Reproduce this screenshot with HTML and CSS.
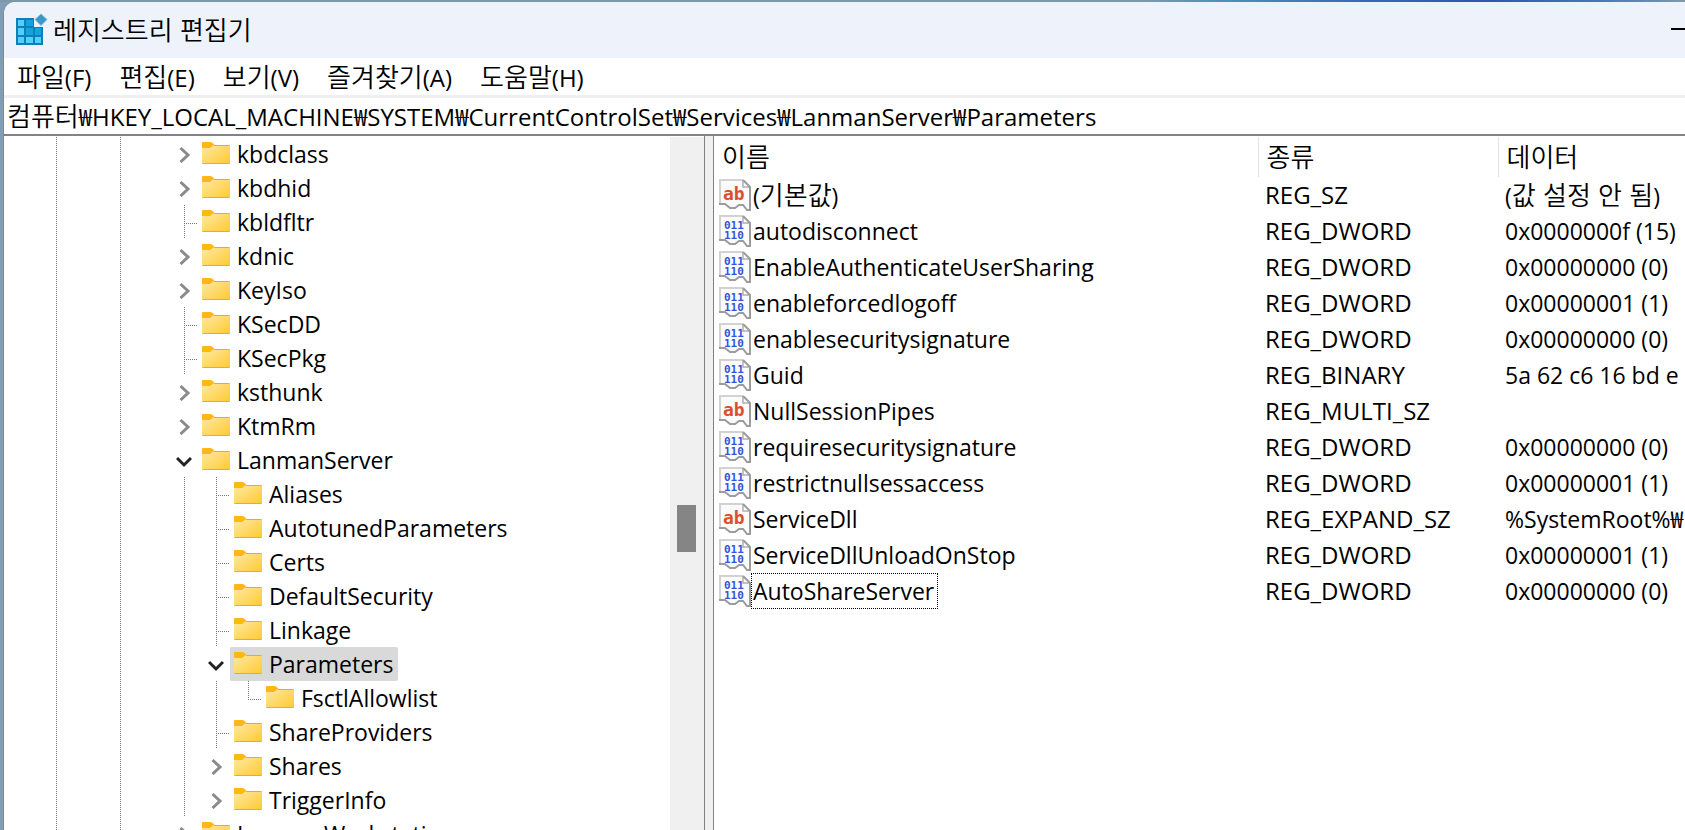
FILE: index.html
```html
<!DOCTYPE html>
<html lang="ko">
<head>
<meta charset="utf-8">
<title>레지스트리 편집기</title>
<link rel="stylesheet" href="styles.css">
</head>
<body>
<svg class="defs" aria-hidden="true">
  <defs>
    <linearGradient id="fold" x1="0" y1="0" x2="1" y2="1"><stop offset="0" stop-color="#ffe9a3"/><stop offset="1" stop-color="#ffc933"/></linearGradient>
    <symbol id="folder" viewBox="0 0 28 22">
      <path d="M0 1a1 1 0 0 1 1-1h8l3 2v4H0z" fill="#fdb813"/>
      <path d="M0 6h8l4-3h15a1 1 0 0 1 1 1v17a1 1 0 0 1-1 1H1a1 1 0 0 1-1-1z" fill="url(#fold)"/>
      <path d="M12 3.500h15.500M.5 21.500h27" stroke="#eeac1c" fill="none"/>
    </symbol>
    <symbol id="page" viewBox="0 0 32 32">
      <path d="M1 1h22l8 8v22l-5-1-3-4h-4l-3 3h-5l-4-3H1z" fill="#fbfbfb"/>
      <path d="M1 25V1h23" fill="none" stroke="#d2d2d2" stroke-width="2"/>
      <path d="M24 1v7h7" fill="#fff" stroke="#b0b0b0" stroke-width="1.500"/>
      <path d="M24 1l7 7v23h-3l-4-5h-4l-4 3h-5l-5-4H0" fill="none" stroke="#9c9c9c" stroke-width="2"/>
    </symbol>
    <symbol id="closed" viewBox="0 0 16 18"><path d="M4.500 3l7.500 7-7.500 7" fill="none" stroke="#8b8b8b" stroke-width="3"/></symbol>
    <symbol id="open" viewBox="0 0 16 18"><path d="M1 7l7 7 7-7" fill="none" stroke="#222" stroke-width="3"/></symbol>
  </defs>
</svg>
<div class="desktop">
<main class="window">
  <header class="titlebar">
    <svg class="app-icon" viewBox="0 0 32 32" aria-hidden="true">
      <path d="M0 5h18v9h9v18H0z" fill="#0f7fb8"/>
      <path d="M2 7h6v6H2zM2 15h6v7H2zM2 24h6v6H2zM10 24h7v6h-7zM19 24h6v6h-6z" fill="#50d0fb"/>
      <path d="M10 7h7v6h-7zM10 15h7v7h-7zM19 15h6v7h-6z" fill="#10a5df"/>
      <path d="M25 1l6 5.500-6 6-6-6z" fill="#3a98c4" stroke="#7ab8d6"/>
    </svg>
    <h1 class="title">레지스트리 편집기</h1>
    <button class="minimize" aria-label="최소화"></button>
  </header>
  <nav class="menu">
    <button><span class="ko">파일</span>(F)</button>
    <button><span class="ko">편집</span>(E)</button>
    <button><span class="ko">보기</span>(V)</button>
    <button><span class="ko">즐겨찾기</span>(A)</button>
    <button><span class="ko">도움말</span>(H)</button>
  </nav>
  <div class="address"><span class="ko">컴퓨터</span>₩HKEY_LOCAL_MACHINE₩SYSTEM₩CurrentControlSet₩Services₩LanmanServer₩Parameters</div>
  <div class="panes">
    <section class="tree-pane">
      <ul class="tree" id="tree"></ul>
      <div class="scrollbar"><div class="thumb"></div></div>
    </section>
    <div class="splitter"></div>
    <section class="list-pane">
      <table class="values">
        <colgroup><col class="c-name"><col class="c-type"><col></colgroup>
        <thead><tr><th><span class="ko">이름</span></th><th><span class="ko">종류</span></th><th><span class="ko">데이터</span></th></tr></thead>
        <tbody id="values"></tbody>
      </table>
    </section>
  </div>
</main>
</div>
<script src="app.js"></script>
</body>
</html>
```
FILE: styles.css
```css
* { box-sizing: border-box; }
body {
  margin: 0;
  height: 100vh;
  overflow: hidden;
  font: 23px/34px "Open Sans", "Noto Sans CJK KR", sans-serif;
  color: #000;
}
.defs { position: absolute; width: 0; height: 0; }
.desktop {
  height: 100%;
  padding: 2px 0 0 3px;
  background:
    linear-gradient(90deg, #7f98a9 0 68%, #4f93b5 72%, #3a6cba 80%, #2f57ad 88%, #4478bd 95%, #8199a5) top / 100% 2px no-repeat,
    #7f9db4;
}
.window {
  height: 100%;
  display: flex;
  flex-direction: column;
  background: #fff;
  border-left: 1px solid #83878e;
  border-top-left-radius: 12px;
  overflow: hidden;
}
.ko { font-family: "Noto Sans CJK KR", sans-serif; font-size: 26px; font-weight: 350; }
.titlebar {
  flex: none;
  height: 56px;
  display: flex;
  align-items: center;
  gap: 5px;
  padding: 0 0 3px 12px;
  background: #eef3fb;
}
.app-icon { width: 32px; height: 32px; }
.title { margin: 0; font: 350 26px/34px "Noto Sans CJK KR", sans-serif; }
.minimize {
  margin-left: auto;
  width: 14px;
  height: 2px;
  padding: 0;
  border: 0;
  background: #000;
}
.menu {
  flex: none;
  height: 40px;
  display: flex;
  align-items: center;
  gap: 28px;
  padding: 0 13px;
  border-bottom: 3px solid #efefef;
  font-size: 24px;
}
.menu button {
  padding: 0;
  border: 0;
  background: none;
  color: inherit;
  font: inherit;
  white-space: nowrap;
}
.address {
  flex: none;
  height: 38px;
  padding: 0 3px;
  border-bottom: 2px solid #828287;
  white-space: nowrap;
  font-size: 24px;
  line-height: 34px;
}
.panes { flex: 1; min-height: 0; display: flex; }
.tree-pane {
  flex: none;
  width: 701px;
  display: flex;
  border-right: 1px solid #828287;
  overflow: hidden;
}
.tree { flex: 1; margin: 0; padding: 1px 0 0 36px; list-style: none; }
.node { display: flex; height: 34px; align-items: center; white-space: nowrap; }
.guide { flex: none; width: 32px; height: 34px; display: flex; align-items: center; }
.guide.own { width: 30px; }
.guide.line { background: repeating-linear-gradient(#777 0 1px, transparent 1px 2px) 16px 0 / 1px 100% no-repeat; }
.guide.last { background-size: 1px 18px; }
.guide.tee::after {
  content: "";
  width: 14px;
  height: 1px;
  margin: 2px 0 0 16px;
  background: repeating-linear-gradient(90deg, #777 0 1px, transparent 1px 2px);
}
.guide svg { width: 16px; height: 18px; margin-left: 8px; }
.label { display: flex; align-items: center; gap: 7px; height: 34px; padding: 0 5px 0 4px; border-radius: 2px; }
.label svg { width: 28px; height: 22px; margin-bottom: 3px; }
.selected { background: #d9d9d9; }
.scrollbar { flex: none; width: 34px; margin-top: 1px; padding: 368px 8px 0 7px; background: #f0f0f0; }
.thumb { height: 47px; background: #858585; }
.splitter { flex: none; width: 9px; background: #f0f0f0; border-right: 1px solid #828287; }
.list-pane { flex: 1; min-width: 0; overflow: hidden; }
.values { width: 100%; table-layout: fixed; border-collapse: collapse; margin-top: 1px; }
.c-name { width: 544px; }
.c-type { width: 240px; }
.values th {
  height: 40px;
  padding: 0 8px;
  border-right: 1px solid #e3e3e3;
  text-align: left;
  font-weight: 400;
}
.values th:last-child { border-right: 0; }
.values td { height: 36px; padding: 0 7px; white-space: nowrap; }
.values td:first-child { padding-left: 5px; }
.values td:nth-child(2) { font-size: 24px; }
.name { display: flex; height: 36px; align-items: center; }
.name svg { width: 32px; height: 32px; flex: none; }
.text { padding: 0 3px 0 1px; border: 1px dotted transparent; }
.focus { border-color: #000; }
.ab { font: 700 18px "DejaVu Sans Mono", monospace; fill: #dd4f2c; }
.bits { font: 700 11px "DejaVu Sans Mono", monospace; fill: #3355dd; }
```
FILE: app.js
```js
const use = id => `<svg aria-hidden="true"><use href="#${id}"/></svg>`;

// [name, depth, state]
const nodes = [
  ["kbdclass", 0, "closed"], ["kbdhid", 0, "closed"], ["kbldfltr", 0, "leaf"],
  ["kdnic", 0, "closed"], ["KeyIso", 0, "closed"], ["KSecDD", 0, "leaf"],
  ["KSecPkg", 0, "leaf"], ["ksthunk", 0, "closed"], ["KtmRm", 0, "closed"],
  ["LanmanServer", 0, "open"], ["Aliases", 1, "leaf"], ["AutotunedParameters", 1, "leaf"],
  ["Certs", 1, "leaf"], ["DefaultSecurity", 1, "leaf"], ["Linkage", 1, "leaf"],
  ["Parameters", 1, "open selected"], ["FsctlAllowlist", 2, "last"],
  ["ShareProviders", 1, "leaf"], ["Shares", 1, "closed"], ["TriggerInfo", 1, "closed"],
  ["LanmanWorkstation", 0, "closed"]
];
document.getElementById("tree").innerHTML = nodes.map(([name, depth, state]) => {
  const kind = state.split(" ")[0];
  const own = kind === "leaf" ? `<span class="guide own line tee"></span>`
    : kind === "last" ? `<span class="guide own line last tee"></span>`
    : `<span class="guide own">${use(kind)}</span>`;
  return `<li class="node"><span class="guide line"></span><span class="guide"></span>` +
    `<span class="guide line"></span><span class="guide"></span>` +
    `<span class="guide line"></span>`.repeat(depth) + own +
    `<span class="label${state.includes("selected") ? " selected" : ""}">${use("folder")}${name}</span></li>`;
}).join("");

const values = [
  ["s", `(<span class="ko">기본값</span>)`, "REG_SZ", `(<span class="ko">값 설정 안 됨</span>)`],
  ["d", "autodisconnect", "REG_DWORD", "0x0000000f (15)"],
  ["d", "EnableAuthenticateUserSharing", "REG_DWORD", "0x00000000 (0)"],
  ["d", "enableforcedlogoff", "REG_DWORD", "0x00000001 (1)"],
  ["d", "enablesecuritysignature", "REG_DWORD", "0x00000000 (0)"],
  ["d", "Guid", "REG_BINARY", "5a 62 c6 16 bd e"],
  ["s", "NullSessionPipes", "REG_MULTI_SZ", ""],
  ["d", "requiresecuritysignature", "REG_DWORD", "0x00000000 (0)"],
  ["d", "restrictnullsessaccess", "REG_DWORD", "0x00000001 (1)"],
  ["s", "ServiceDll", "REG_EXPAND_SZ", "%SystemRoot%₩"],
  ["d", "ServiceDllUnloadOnStop", "REG_DWORD", "0x00000001 (1)"],
  ["d", "AutoShareServer", "REG_DWORD", "0x00000000 (0)", "focus"]
];
const mark = {
  s: `<text class="ab" x="4" y="21">ab</text>`,
  d: `<text class="bits" x="5" y="14">011</text><text class="bits" x="5" y="24">110</text>`
};
document.getElementById("values").innerHTML = values.map(([kind, name, type, data, focus]) =>
  `<tr><td><div class="name"><svg viewBox="0 0 32 32" aria-hidden="true"><use href="#page"/>${mark[kind]}</svg>` +
  `<span class="text ${focus || ""}">${name}</span></div></td><td>${type}</td><td>${data}</td></tr>`
).join("");
```
